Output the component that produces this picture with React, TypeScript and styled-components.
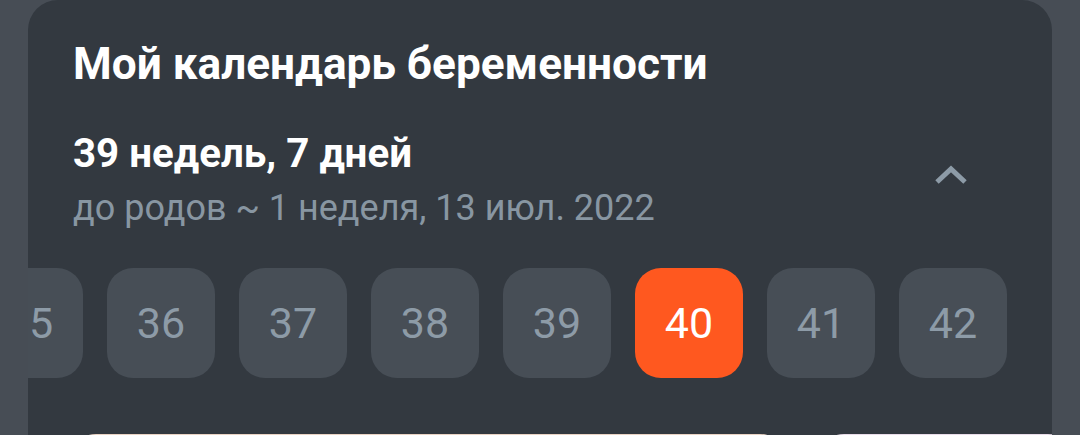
import * as React from 'react';
import styled, { createGlobalStyle } from 'styled-components';

const GlobalStyle = createGlobalStyle`
  html, body {
    margin: 0;
    padding: 0;
    background: #474d55;
    font-family: Roboto, "Noto Sans", sans-serif;
    overflow: hidden;
  }
`;

const TOTAL_WEEKS = 42;
const CURRENT_WEEK = 40;
const FIRST_RENDERED = 35;
const TILE = 108;
const GAP = 24;
const SIDE = 45;

export default function App() {
  const stripRef = React.useRef<HTMLDivElement>(null);

  // scroll so that week 36 is the first whole tile on screen
  React.useLayoutEffect(() => {
    const el = stripRef.current;
    if (el) el.scrollLeft = (36 - FIRST_RENDERED) * (TILE + GAP) + SIDE - 79;
  }, []);

  const weeks = Array.from(
    { length: TOTAL_WEEKS - FIRST_RENDERED + 1 },
    (_, i) => i + FIRST_RENDERED
  );

  return (
    <>
      <GlobalStyle />
      <Page>
        <Card>
          <Title>Мой календарь беременности</Title>
          <WeekHeader>
            <WeekInfo>
              <WeekTitle>39 недель, 7 дней</WeekTitle>
              <WeekCaption>до родов ~ 1 неделя, 13 июл. 2022</WeekCaption>
            </WeekInfo>
            <CollapseButton aria-label="Свернуть">
              <svg width="36" height="22" viewBox="0 0 36 22" fill="none">
                <path d="M4 18 L18 5 L32 18" stroke="#8d9ba7" strokeWidth="5" />
              </svg>
            </CollapseButton>
          </WeekHeader>
          <WeekStrip ref={stripRef}>
            {weeks.map((w) => (
              <WeekTile key={w} $active={w === CURRENT_WEEK}>
                {w}
              </WeekTile>
            ))}
          </WeekStrip>
          <ArticleRow>
            <Article $tone="#ead3c4" $width={720} />
            <Article $tone="#e9dce9" $width={260} />
          </ArticleRow>
        </Card>
      </Page>
    </>
  );
}

const Page = styled("div")`
  width: 1080px;
  height: 435px;
  padding: 0 28px;
  box-sizing: border-box;
`;

const Card = styled("section")`
  background: #333940;
  border-radius: 30px 30px 0 0;
  height: 435px;
  padding-top: 38px;
  box-sizing: border-box;
  overflow: hidden;
`;

const Title = styled("h1")`
  margin: 0 ${SIDE}px;
  font-size: 44.2px;
  font-weight: 700;
  line-height: 52px;
  color: #ffffff;
`;

const WeekHeader = styled("div")`
  display: flex;
  align-items: center;
  justify-content: space-between;
  margin: 40px ${SIDE}px 0;
`;

const WeekInfo = styled("div")`
  display: flex;
  flex-direction: column;
`;

const WeekTitle = styled("div")`
  font-size: 40.3px;
  font-weight: 700;
  line-height: 48px;
  color: #ffffff;
`;

const WeekCaption = styled("div")`
  margin-top: 8px;
  font-size: 36px;
  font-weight: 400;
  line-height: 44px;
  color: #8896a2;
`;

const CollapseButton = styled("button")`
  border: 0;
  background: none;
  padding: 0;
  margin: 0 38px 10px 0;
  display: flex;
  align-items: center;
`;

const WeekStrip = styled("div")`
  display: flex;
  gap: ${GAP}px;
  margin-top: 38px;
  padding: 0 ${SIDE}px;
  overflow-x: auto;
  scrollbar-width: none;
  &::-webkit-scrollbar {
    display: none;
  }
`;

const WeekTile = styled("div")<{ $active?: boolean }>`
  flex: 0 0 ${TILE}px;
  height: 110px;
  border-radius: 26px;
  display: flex;
  align-items: center;
  justify-content: center;
  font-size: 43px;
  font-weight: 400;
  background: ${(p) => (p.$active ? "#ff581f" : "#474e56")};
  color: ${(p) => (p.$active ? "#ffffff" : "#8d9ba7")};
`;

const ArticleRow = styled("div")`
  display: flex;
  gap: 28px;
  margin-top: 56px;
  padding-left: 40px;
`;

const Article = styled("div")<{ $tone: string; $width: number }>`
  flex: 0 0 ${(p) => p.$width}px;
  height: 300px;
  border-radius: 28px;
  background: ${(p) => p.$tone};
`;
